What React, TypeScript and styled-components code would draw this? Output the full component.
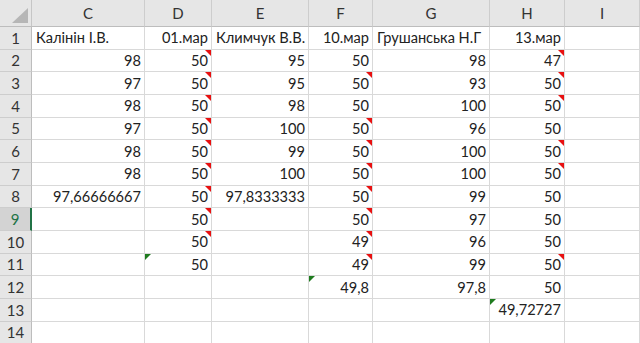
import { Fragment } from 'react'
import styled, { createGlobalStyle } from 'styled-components'

const Global = createGlobalStyle`
  html, body {
    margin: 0;
    padding: 0;
    background: #ffffff;
  }
  body {
    font-family: Lato, "Open Sans", "Noto Sans", sans-serif;
  }
`

const Sheet = styled.div`
  display: grid;
  grid-template-columns: 32px 113px 67px 97px 64px 117px 75px 75px;
  grid-template-rows: 27px repeat(14, 22.67px);
  width: 640px;
  height: 343px;
  overflow: hidden;
  background: #ffffff;
  font-size: 14.6px;
  color: #222222;
`

const Corner = styled.div`
  position: relative;
  background: #e6e6e6;
  border-right: 1px solid #c6c6c6;
  border-bottom: 1px solid #bdbdbd;
  &::after {
    content: '';
    position: absolute;
    right: 3px;
    bottom: 3px;
    width: 0;
    height: 0;
    border-left: 16px solid transparent;
    border-bottom: 15px solid #b6b6b6;
  }
`

const ColHeader = styled.div`
  display: flex;
  align-items: center;
  justify-content: center;
  background: #e6e6e6;
  border-right: 1px solid #cdcdcd;
  border-bottom: 1px solid #bdbdbd;
  color: #333333;
  font-size: 15px;
`

const RowHeader = styled.div<{ $selected?: boolean }>`
  display: flex;
  align-items: center;
  justify-content: center;
  background: ${p => (p.$selected ? '#d3d3d3' : '#e6e6e6')};
  color: ${p => (p.$selected ? '#217346' : '#333333')};
  border-bottom: 1px solid #cdcdcd;
  border-right: ${p => (p.$selected ? '2px solid #217346' : '1px solid #bdbdbd')};
  font-size: 15px;
`

type Note = 'comment' | 'error'

const Cell = styled.div<{ $align?: 'left' | 'right'; $note?: Note }>`
  position: relative;
  display: flex;
  align-items: center;
  justify-content: ${p => (p.$align === 'left' ? 'flex-start' : 'flex-end')};
  padding: 0 3px 0 4px;
  border-right: 1px solid #d9d9d9;
  border-bottom: 1px solid #d9d9d9;
  white-space: nowrap;
  &::after {
    content: '';
    position: absolute;
    width: 0;
    height: 0;
    display: ${p => (p.$note ? 'block' : 'none')};
    ${p =>
      p.$note === 'comment'
        ? `top: 0; right: 0; border-left: 6px solid transparent; border-top: 6px solid #e81010;`
        : `top: 0; left: 0; border-right: 6px solid transparent; border-top: 6px solid #1e7b1e;`}
  }
`

type CellData = { v?: string; left?: boolean; note?: Note }

const cols = ['C', 'D', 'E', 'F', 'G', 'H', 'I']

const c = (v?: string, note?: Note): CellData => ({ v, note })

const rows: CellData[][] = [
  [
    { v: 'Калінін І.В.', left: true },
    c('01.мар'),
    { v: 'Климчук В.В.', left: true },
    c('10.мар'),
    { v: 'Грушанська Н.Г', left: true },
    c('13.мар'),
    c(),
  ],
  [c('98'), c('50', 'comment'), c('95'), c('50'), c('98'), c('47', 'comment'), c()],
  [c('97'), c('50', 'comment'), c('95'), c('50', 'comment'), c('93'), c('50', 'comment'), c()],
  [c('98'), c('50', 'comment'), c('98'), c('50'), c('100'), c('50', 'comment'), c()],
  [c('97'), c('50', 'comment'), c('100'), c('50', 'comment'), c('96'), c('50'), c()],
  [c('98'), c('50', 'comment'), c('99'), c('50', 'comment'), c('100'), c('50', 'comment'), c()],
  [c('98'), c('50', 'comment'), c('100'), c('50', 'comment'), c('100'), c('50', 'comment'), c()],
  [c('97,66666667'), c('50', 'comment'), c('97,8333333'), c('50', 'comment'), c('99'), c('50'), c()],
  [c(), c('50', 'comment'), c(), c('50', 'comment'), c('97'), c('50'), c()],
  [c(), c('50', 'comment'), c(), c('49', 'comment'), c('96'), c('50'), c()],
  [c(), c('50', 'error'), c(), c('49', 'comment'), c('99'), c('50', 'comment'), c()],
  [c(), c(), c(), c('49,8', 'error'), c('97,8'), c('50'), c()],
  [c(), c(), c(), c(), c(), c('49,72727', 'error'), c()],
  [c(), c(), c(), c(), c(), c(), c()],
]

export default function App() {
  return (
    <>
      <Global />
      <Sheet>
        <Corner />
        {cols.map(col => (
          <ColHeader key={col}>{col}</ColHeader>
        ))}
        {rows.map((row, i) => (
          <Fragment key={i}>
            <RowHeader $selected={i === 8}>{i + 1}</RowHeader>
            {row.map((cell, j) => (
              <Cell key={j} $align={cell.left ? 'left' : 'right'} $note={cell.note}>
                {cell.v}
              </Cell>
            ))}
          </Fragment>
        ))}
      </Sheet>
    </>
  )
}
